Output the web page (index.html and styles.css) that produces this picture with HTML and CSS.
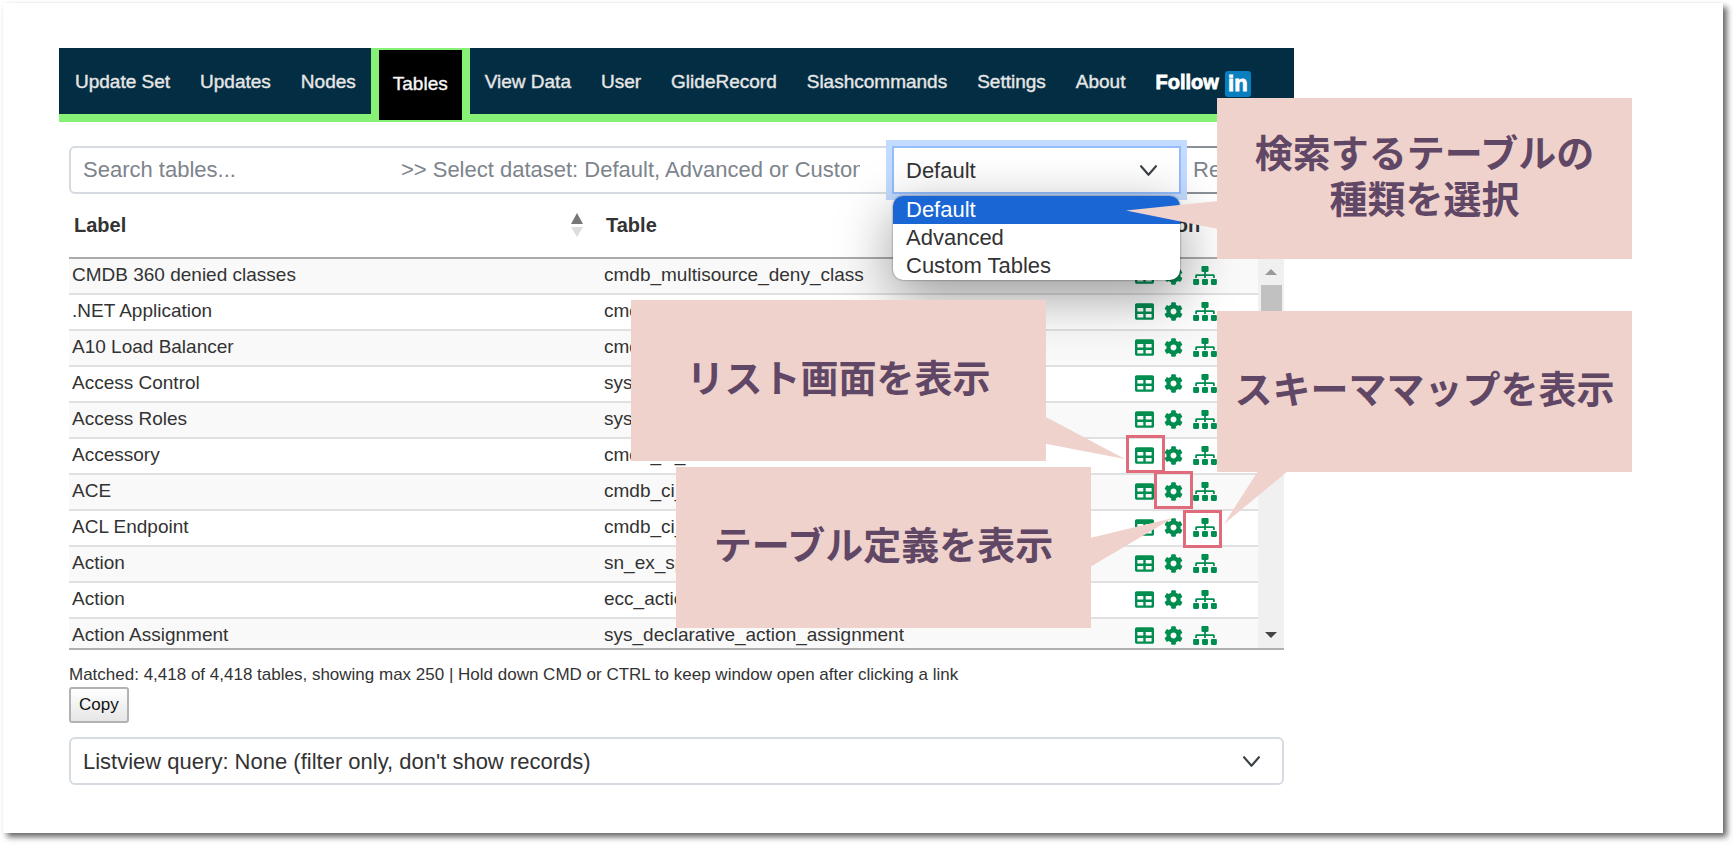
FILE: index.html
```html
<!DOCTYPE html>
<html lang="ja">
<head>
    <meta charset="UTF-8">
    <meta name="viewport" content="width=device-width, initial-scale=1.0">
    <title>Tables</title>
    <link rel="stylesheet" href="styles.css">
</head>
<body>
    <svg class="sprite" aria-hidden="true">
        <symbol id="i-table" viewBox="0 0 512 512"><path d="M464 32H48C21.49 32 0 53.49 0 80v352c0 26.51 21.49 48 48 48h416c26.51 0 48-21.49 48-48V80c0-26.51-21.49-48-48-48zM224 416H64v-96h160v96zm0-160H64v-96h160v96zm224 160H288v-96h160v96zm0-160H288v-96h160v96z"/></symbol>
        <symbol id="i-cog" viewBox="0 0 512 512"><path d="M487.4 315.7l-42.6-24.6c4.3-23.2 4.3-47 0-70.2l42.6-24.6c4.9-2.8 7.1-8.6 5.5-14-11.1-35.6-30-67.8-54.7-94.6-3.8-4.1-10-5.1-14.8-2.3L380.8 110c-17.9-15.4-38.5-27.3-60.8-35.1V25.8c0-5.6-3.9-10.5-9.4-11.7-36.7-8.2-74.3-7.8-109.2 0-5.5 1.2-9.4 6.1-9.4 11.7V75c-22.2 7.9-42.8 19.8-60.8 35.1L88.7 85.5c-4.9-2.8-11-1.9-14.8 2.3-24.7 26.7-43.6 58.9-54.7 94.6-1.7 5.4.6 11.2 5.5 14L67.3 221c-4.3 23.2-4.3 47 0 70.2l-42.6 24.6c-4.9 2.8-7.1 8.6-5.5 14 11.1 35.6 30 67.8 54.7 94.6 3.8 4.1 10 5.1 14.8 2.3l42.6-24.6c17.9 15.4 38.5 27.3 60.8 35.1v49.2c0 5.6 3.9 10.5 9.4 11.7 36.7 8.2 74.3 7.8 109.2 0 5.5-1.2 9.4-6.1 9.4-11.7v-49.2c22.2-7.9 42.8-19.8 60.8-35.1l42.6 24.6c4.9 2.8 11 1.9 14.8-2.3 24.7-26.7 43.6-58.9 54.7-94.6 1.5-5.5-.7-11.3-5.6-14.1zM256 336c-44.1 0-80-35.9-80-80s35.9-80 80-80 80 35.9 80 80-35.9 80-80 80z"/></symbol>
        <symbol id="i-map" viewBox="0 0 640 512"><path d="M128 352H32c-17.67 0-32 14.33-32 32v96c0 17.67 14.33 32 32 32h96c17.67 0 32-14.33 32-32v-96c0-17.67-14.33-32-32-32zm-24-80h192v48h48v-48h192v48h48v-57.59c0-21.17-17.23-38.41-38.41-38.41H344v-64h40c17.67 0 32-14.33 32-32V32c0-17.67-14.33-32-32-32H256c-17.67 0-32 14.33-32 32v96c0 17.67 14.33 32 32 32h40v64H94.41C73.23 224 56 241.23 56 262.41V320h48v-48zm264 80h-96c-17.67 0-32 14.33-32 32v96c0 17.67 14.33 32 32 32h96c17.67 0 32-14.33 32-32v-96c0-17.67-14.33-32-32-32zm240 0h-96c-17.67 0-32 14.33-32 32v96c0 17.67 14.33 32 32 32h96c17.67 0 32-14.33 32-32v-96c0-17.67-14.33-32-32-32z"/></symbol>
    </svg>

    <div class="slide">
        <div class="app">
            <nav class="navbar">
                <a href="#">Update Set</a>
                <a href="#">Updates</a>
                <a href="#">Nodes</a>
                <a href="#" class="active">Tables</a>
                <a href="#">View Data</a>
                <a href="#">User</a>
                <a href="#">GlideRecord</a>
                <a href="#">Slashcommands</a>
                <a href="#">Settings</a>
                <a href="#">About</a>
                <a href="#" class="follow">Follow <span class="linkedin">in</span></a>
            </nav>

            <div class="content">
                <div class="toolbar">
                    <input type="text" class="search" aria-label="Search tables" placeholder="Search tables...                           &gt;&gt; Select dataset: Default, Advanced or Custom">
                    <div class="select-wrap dataset">
                        <select aria-label="Dataset">
                            <option>Default</option>
                            <option>Advanced</option>
                            <option>Custom Tables</option>
                        </select>
                        <svg class="chevron" viewBox="0 0 16 16"><path d="M1 4l7 8 7-8"/></svg>
                        <ul class="menu">
                            <li class="selected">Default</li>
                            <li>Advanced</li>
                            <li>Custom Tables</li>
                        </ul>
                    </div>
                    <input type="text" class="records" aria-label="Records" placeholder="Records">
                </div>

                <table class="grid grid-head">
                    <tr>
                        <th class="col-label"><div class="sortable">Label
                            <svg class="sort" viewBox="0 0 12 24"><path fill="#777" d="M6 0l6 11H0z"/><path fill="#ddd" d="M0 14h12L6 24z"/></svg></div></th>
                        <th class="col-table">Table</th>
                        <th class="col-action">Action</th>
                    </tr>
                </table>
                <div class="scroll-pane">
                    <table class="grid grid-body" id="rows"></table>
                    <div class="scrollbar">
                        <span class="arrow up"></span>
                        <span class="thumb"></span>
                        <span class="arrow down"></span>
                    </div>
                </div>

                <div class="info">Matched: 4,418 of 4,418 tables, showing max 250 | Hold down CMD or CTRL to keep window open after clicking a link</div>
                <button class="copy">Copy</button>

                <div class="select-wrap listview">
                    <select aria-label="Listview query">
                        <option>Listview query: None (filter only, don't show records)</option>
                    </select>
                    <svg class="chevron" viewBox="0 0 16 16"><path d="M1 4l7 8 7-8"/></svg>
                </div>
            </div>
        </div>
    </div>

    <!-- annotations -->
    <div class="callout c-dataset">
        <svg class="tail" viewBox="0 0 415 161"><path d="M1 103L-91 112.500L1 131z"/></svg>
        <p>検索するテーブルの<br>種類を選択</p>
    </div>
    <div class="callout c-list">
        <svg class="tail" viewBox="0 0 415 161"><path d="M413 116L494 159L413 143.500z"/></svg>
        <p>リスト画面を表示</p>
    </div>
    <div class="callout c-schema">
        <svg class="tail" viewBox="0 0 415 161"><path d="M41 160L7 213L71 160z"/></svg>
        <p>スキーママップを表示</p>
    </div>
    <div class="callout c-define">
        <svg class="tail" viewBox="0 0 415 161"><path d="M414 71L497 51L414 100z"/></svg>
        <p>テーブル定義を表示</p>
    </div>
    <div class="mark m-list"></div>
    <div class="mark m-define"></div>
    <div class="mark m-schema"></div>

    <script>
    const tables = [
        ['CMDB 360 denied classes', 'cmdb_multisource_deny_class'],
        ['.NET Application', 'cmdb_ci_appl_dot_net'],
        ['A10 Load Balancer', 'cmdb_ci_lb_a10'],
        ['Access Control', 'sys_security_acl'],
        ['Access Roles', 'sys_security_acl_role'],
        ['Accessory', 'cmdb_ci_acc'],
        ['ACE', 'cmdb_ci_ace'],
        ['ACL Endpoint', 'cmdb_ci_endpoint_acl'],
        ['Action', 'sn_ex_sp_action'],
        ['Action', 'ecc_action'],
        ['Action Assignment', 'sys_declarative_action_assignment']
    ];

    let html = '';
    for (let row of tables) {
        html += `<tr>
            <td class="col-label">${row[0]}</td>
            <td class="col-table">${row[1]}</td>
            <td class="col-action"><div class="actions">
                <a href="#" aria-label="List"><svg class="icon"><use href="#i-table"/></svg></a>
                <a href="#" aria-label="Definition"><svg class="icon"><use href="#i-cog"/></svg></a>
                <a href="#" aria-label="Schema map"><svg class="icon wide"><use href="#i-map"/></svg></a>
            </div></td>
        </tr>`;
    }
    document.getElementById('rows').innerHTML = html;
    </script>
</body>
</html>
```

FILE: styles.css
```css
* {
    box-sizing: border-box;
}

body {
    font-family: "Liberation Sans", Arial, sans-serif;
    margin: 0;
    padding: 3px 13px 13px 3px;
    position: relative;
    color: #333;
    background-color: #fff;
}

.sprite {
    display: none;
}

.slide {
    padding: 45px 56px 48px;
    background-color: #fff;
    box-shadow: 4px 4px 6px rgba(0, 0, 0, 0.6), 0 0 2px rgba(0, 0, 0, 0.04);
}

.app {
    max-width: 1235px;
}

/* top navigation */
.navbar {
    display: flex;
    height: 74px;
    padding-left: 1px;
    background-color: #032d42;
    border-bottom: 8px solid #87f077;
}

.navbar a {
    display: flex;
    align-items: center;
    padding: 2px 15px 0;
    font-size: 19px;
    color: #e6e6e6;
    text-decoration: none;
    white-space: nowrap;
    -webkit-text-stroke: 0.4px #e6e6e6;
}

.navbar a.active {
    margin: 0 8px -6px;
    padding: 0 14px 2px;
    color: #fff;
    background-color: #000;
    border-top: 2px solid #87f077;
    box-shadow: -8px 0 0 #87f077, 8px 0 0 #87f077;
}

.navbar a.follow {
    gap: 6px;
    font-size: 20px;
    font-weight: bold;
    color: #fff;
    -webkit-text-stroke: 0.8px #fff;
}

.linkedin {
    width: 26px;
    height: 26px;
    margin-top: 3px;
    line-height: 26px;
    font-size: 22px;
    text-align: center;
    background-color: #0a7fc0;
    border-radius: 3px;
}

.content {
    padding: 24px 10px 0;
}

/* search row */
.toolbar {
    display: flex;
    height: 49px;
}

.search,
.records,
select {
    display: block;
    height: 48px;
    font-family: inherit;
    font-size: 22px;
    color: #333;
    background-color: #fff;
    border: 2px solid #d5dbe1;
    border-radius: 6px;
    padding: 0 12px;
}

.search {
    flex: 1;
    min-width: 0;
    padding-right: 30px;
    border-radius: 6px 0 0 6px;
}

.search::placeholder,
.records::placeholder {
    color: #7d848b;
    opacity: 1;
}

.records {
    width: 103px;
    border-color: #8a9097;
    border-left: none;
    border-radius: 0 6px 6px 0;
}

.select-wrap {
    position: relative;
}

select {
    width: 100%;
    appearance: none;
}

.chevron {
    position: absolute;
    right: 24px;
    top: 16px;
    width: 17px;
    height: 17px;
    fill: none;
    stroke: #3c4146;
    stroke-width: 2;
    stroke-linecap: round;
    stroke-linejoin: round;
}

.dataset {
    width: 289px;
    z-index: 1;
}

.dataset select {
    border-color: #94bdfb;
    border-radius: 0;
    box-shadow: 0 0 0 6px #c2dbfe;
}

.menu {
    position: absolute;
    top: 50px;
    left: 1px;
    right: 1px;
    margin: 0;
    padding: 0;
    list-style: none;
    font-size: 22px;
    line-height: 28px;
    overflow: hidden;
    background-color: #fff;
    border-radius: 10px;
    box-shadow: 0 0 2px rgba(0, 0, 0, 0.6), 0 16px 56px rgba(0, 0, 0, 0.4);
}

.menu li {
    padding: 0 13px;
}

.menu .selected {
    color: #fff;
    background-color: #1966d4;
}

/* table list */
.grid {
    width: 100%;
    table-layout: fixed;
    border-collapse: separate;
    border-spacing: 0;
}

.grid-head {
    height: 64px;
    font-size: 20px;
    border-bottom: 2px solid #aaa;
}

th {
    padding: 0 5px 2px;
    text-align: left;
}

td {
    height: 36px;
    padding: 0 3px 2px;
    font-size: 19px;
    white-space: nowrap;
    border-bottom: 2px solid #e0e0e0;
}

.grid-head .col-table {
    width: 532px;
}

.grid-head .col-action {
    width: 151px;
}

.grid-body .col-table {
    width: 531px;
}

.grid-body .col-action {
    width: 126px;
}

.sortable {
    display: flex;
    align-items: center;
    justify-content: space-between;
    padding-right: 13px;
}

.sort {
    width: 12px;
    height: 24px;
}

.grid-body tr:nth-child(odd) {
    background-color: #f9f9f9;
}

.scroll-pane {
    display: flex;
    align-items: flex-start;
    height: 391px;
    overflow: hidden;
    border-bottom: 2px solid #b0b0b0;
}

.grid-body {
    flex: 1;
}

.actions {
    display: flex;
    align-items: center;
    gap: 10px;
}

.actions a {
    display: flex;
}

.icon {
    width: 19px;
    height: 19px;
    fill: #008d50;
}

.icon.wide {
    width: 24px;
}

.scrollbar {
    display: flex;
    flex-direction: column;
    align-items: center;
    width: 26px;
    height: 389px;
    padding: 10px 0;
    background-color: #f0f0f0;
}

.arrow {
    border: 6px solid transparent;
}

.arrow.up {
    border-top: none;
    border-bottom-color: #999;
}

.arrow.down {
    margin-top: auto;
    border-bottom: none;
    border-top-color: #444;
}

.thumb {
    width: 21px;
    height: 60px;
    margin-top: 10px;
    background-color: #c1c1c1;
}

.info {
    margin-top: 13px;
    font-size: 17px;
    line-height: 24px;
}

.copy {
    display: block;
    height: 36px;
    padding: 0 8px;
    font-family: inherit;
    font-size: 17px;
    color: #111;
    background: linear-gradient(#fff, #e6e6e6);
    border: 2px solid #b2b2b2;
    border-radius: 3px;
}

.listview {
    margin-top: 14px;
}

/* callouts */
.callout {
    position: absolute;
    display: flex;
    align-items: center;
    justify-content: center;
    width: 415px;
    height: 161px;
    z-index: 2;
    background-color: #f0d2cc;
}

.callout p {
    margin: 0;
    padding-bottom: 10px;
    font-family: "Noto Sans CJK JP", sans-serif;
    font-size: 38px;
    font-weight: bold;
    line-height: 46px;
    text-align: center;
    white-space: nowrap;
    color: #604765;
}

.tail {
    position: absolute;
    left: 0;
    top: 0;
    width: 415px;
    height: 161px;
    overflow: visible;
    fill: #f0d2cc;
}

.c-dataset {
    left: 1217px;
    top: 98px;
}

.c-list {
    left: 631px;
    top: 300px;
}

.c-schema {
    left: 1217px;
    top: 311px;
}

.c-define {
    left: 676px;
    top: 467px;
}

.mark {
    position: absolute;
    width: 39px;
    height: 38px;
    z-index: 3;
    border: 3px solid #e06c7b;
}

.m-list {
    left: 1126px;
    top: 435px;
}

.m-define {
    left: 1154px;
    top: 471px;
}

.m-schema {
    left: 1183px;
    top: 510px;
}
```
